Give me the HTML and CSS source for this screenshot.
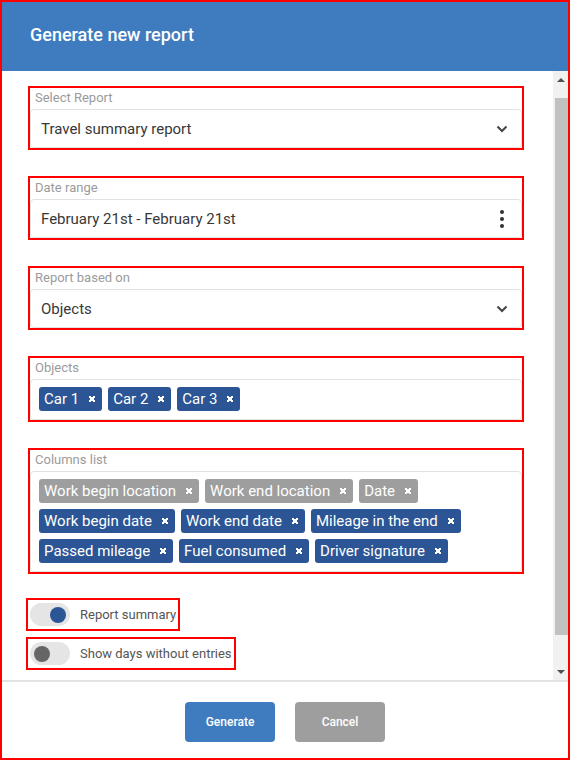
FILE: index.html
```html
<!DOCTYPE html>
<html lang="en">
<head>
    <meta charset="UTF-8">
    <title>Generate new report</title>
    <link rel="stylesheet" href="styles.css">
</head>
<body>

    <div class="dialog">

        <div class="dialog-head">
            <h1>Generate new report</h1>
        </div>

        <div class="dialog-body">
            <div class="content">

                <div class="field">
                    <span class="field-label">Select Report</span>
                    <div class="input">
                        <span>Travel summary report</span>
                        <svg class="chevron" width="12" height="8" viewBox="0 0 12 8"><path d="M1.5 1.5 L6 6 L10.5 1.5" fill="none" stroke="#444" stroke-width="2"/></svg>
                    </div>
                </div>

                <div class="field">
                    <span class="field-label">Date range</span>
                    <div class="input">
                        <span>February 21st - February 21st</span>
                        <svg class="kebab" width="6" height="20" viewBox="0 0 6 20"><circle cx="3" cy="3" r="2"/><circle cx="3" cy="10" r="2"/><circle cx="3" cy="17" r="2"/></svg>
                    </div>
                </div>

                <div class="field">
                    <span class="field-label">Report based on</span>
                    <div class="input">
                        <span>Objects</span>
                        <svg class="chevron" width="12" height="8" viewBox="0 0 12 8"><path d="M1.5 1.5 L6 6 L10.5 1.5" fill="none" stroke="#444" stroke-width="2"/></svg>
                    </div>
                </div>

                <div class="field">
                    <span class="field-label">Objects</span>
                    <div class="chips">
                        <span class="chip">Car 1<i class="remove"></i></span>
                        <span class="chip">Car 2<i class="remove"></i></span>
                        <span class="chip">Car 3<i class="remove"></i></span>
                    </div>
                </div>

                <div class="field">
                    <span class="field-label">Columns list</span>
                    <div class="chips">
                        <span class="chip chip-off">Work begin location<i class="remove"></i></span>
                        <span class="chip chip-off">Work end location<i class="remove"></i></span>
                        <span class="chip chip-off">Date<i class="remove"></i></span>
                        <span class="chip">Work begin date<i class="remove"></i></span>
                        <span class="chip">Work end date<i class="remove"></i></span>
                        <span class="chip">Mileage in the end<i class="remove"></i></span>
                        <span class="chip">Passed mileage<i class="remove"></i></span>
                        <span class="chip">Fuel consumed<i class="remove"></i></span>
                        <span class="chip">Driver signature<i class="remove"></i></span>
                    </div>
                </div>

                <div class="toggle">
                    <span class="track on"><span class="knob"></span></span>
                    <span class="toggle-label">Report summary</span>
                </div>

                <div class="toggle">
                    <span class="track"><span class="knob"></span></span>
                    <span class="toggle-label">Show days without entries</span>
                </div>

            </div>

            <div class="scrollbar">
                <div class="sb-btn"><span class="arrow-up"></span></div>
                <div class="sb-track"><div class="sb-thumb"></div></div>
                <div class="sb-btn"><span class="arrow-down"></span></div>
            </div>
        </div>

        <div class="dialog-foot">
            <button class="btn btn-primary">Generate</button>
            <button class="btn btn-cancel">Cancel</button>
        </div>

    </div>

</body>
</html>
```

FILE: styles.css
```css
* {
    font-family: Roboto, "Liberation Sans", sans-serif;
    box-sizing: border-box;
    margin: 0;
}

body {
    background-color: #fff;
}

.dialog {
    width: 570px;
    height: 760px;
    border: 2px solid #f00;
    display: flex;
    flex-direction: column;
}

.dialog-head {
    height: 69px;
    background-color: #3e7cbf;
    padding: 0 0 4px 28px;
    display: flex;
    align-items: center;
}

.dialog-head h1 {
    color: #fff;
    font-size: 18px;
    font-weight: 500;
}

.dialog-body {
    height: 609px;
    display: flex;
}

.content {
    flex: 1;
    padding: 15px 29px 0 26px;
}

/* fields */

.field {
    border: 2px solid #f00;
    margin-bottom: 26px;
}

.field-label {
    display: block;
    font-size: 13px;
    line-height: 15px;
    color: #9b9b9b;
    padding: 2px 5px 4px;
}

.input {
    height: 39px;
    border: 1px solid #e2e2e2;
    border-radius: 4px;
    display: flex;
    align-items: center;
    justify-content: space-between;
    padding: 0 13px 0 10px;
    font-size: 15px;
    color: #383838;
}

.kebab {
    fill: #333;
    margin-right: 3px;
}

.chips {
    border: 1px solid #e2e2e2;
    border-radius: 4px;
    padding: 7px 8px 8px;
    display: flex;
    flex-wrap: wrap;
    gap: 6px;
}

.chip {
    height: 24px;
    display: inline-flex;
    align-items: center;
    padding: 0 7px 0 5px;
    background-color: #2c5595;
    color: #fff;
    font-size: 15px;
    border-radius: 3px;
}

.chip-off {
    background-color: #9e9e9e;
}

.remove {
    width: 6px;
    height: 6px;
    margin-left: 10px;
    background:
        linear-gradient(45deg, transparent 40%, #fff 40%, #fff 60%, transparent 60%),
        linear-gradient(-45deg, transparent 40%, #fff 40%, #fff 60%, transparent 60%);
}

/* toggles */

.toggle {
    width: fit-content;
    display: flex;
    align-items: center;
    gap: 10px;
    border: 2px solid #f00;
    padding: 3px 2px;
    margin-left: -2px;
    margin-top: -2px;
}

.toggle + .toggle {
    margin-top: 6px;
}

.track {
    width: 40px;
    height: 23px;
    border-radius: 12px;
    background-color: #e5e5e5;
    display: flex;
    align-items: center;
    padding: 0 4px;
}

.track.on {
    justify-content: flex-end;
}

.knob {
    width: 16px;
    height: 16px;
    border-radius: 50%;
    background-color: #666;
}

.track.on .knob {
    background-color: #2c5595;
}

.toggle-label {
    font-size: 13px;
    color: #555;
}

/* scrollbar */

.scrollbar {
    width: 15px;
    background-color: #f1f1f1;
    display: flex;
    flex-direction: column;
}

.sb-btn {
    height: 17px;
    display: flex;
    align-items: center;
    justify-content: center;
}

.arrow-up {
    border-left: 4px solid transparent;
    border-right: 4px solid transparent;
    border-bottom: 4px solid #505050;
}

.arrow-down {
    border-left: 4px solid transparent;
    border-right: 4px solid transparent;
    border-top: 4px solid #505050;
}

.sb-track {
    flex: 1;
    padding-top: 10px;
}

.sb-thumb {
    height: 537px;
    margin-left: 2px;
    background-color: #c1c1c1;
}

/* footer */

.dialog-foot {
    flex: 1;
    border-top: 2px solid #e3e3e3;
    display: flex;
    align-items: center;
    justify-content: center;
    gap: 20px;
    padding-top: 4px;
}

.btn {
    width: 90px;
    height: 40px;
    border: none;
    border-radius: 4px;
    color: #fff;
    font-size: 12px;
    font-weight: 500;
}

.btn-primary {
    background-color: #3e7cbf;
}

.btn-cancel {
    background-color: #9e9e9e;
}
```
